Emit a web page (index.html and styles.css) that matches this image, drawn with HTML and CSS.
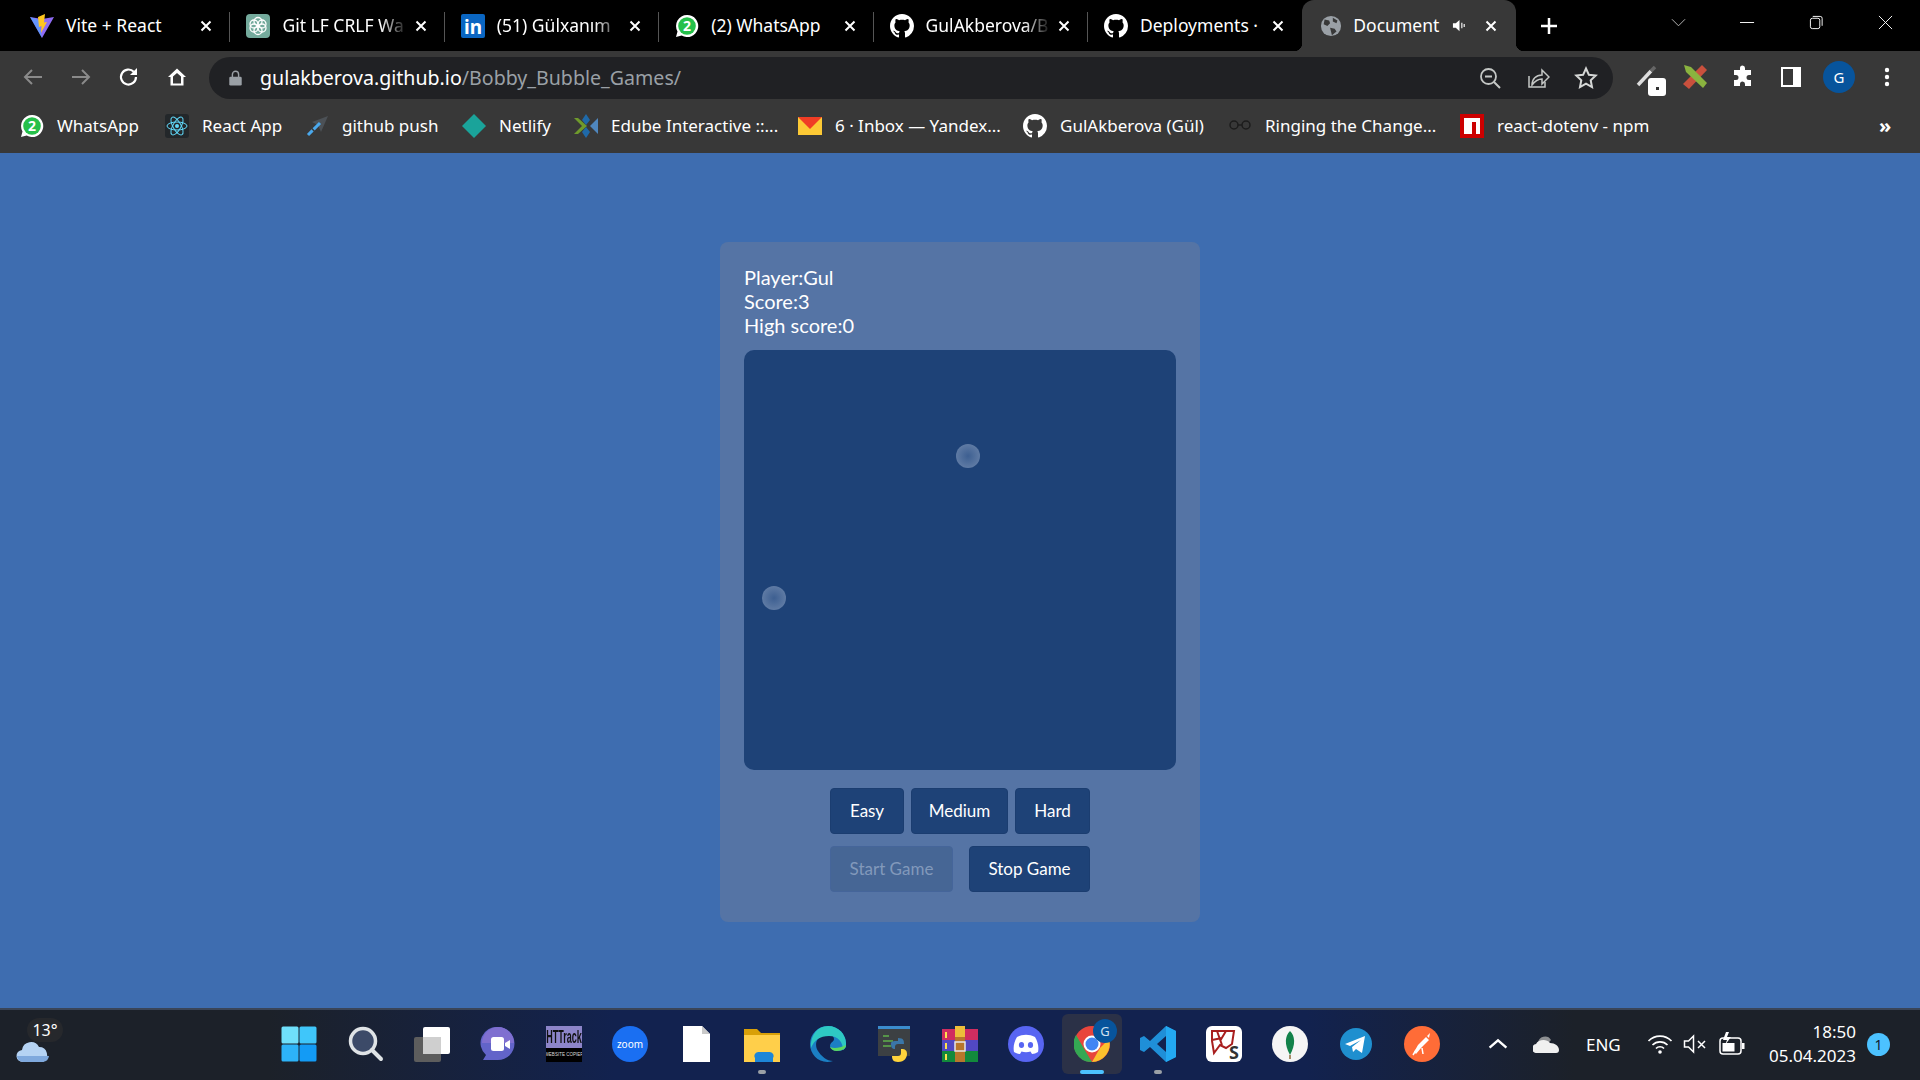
FILE: index.html
```html
<!DOCTYPE html>
<html lang="en">
<head>
    <meta charset="UTF-8">
    <meta name="viewport" content="width=device-width, initial-scale=1.0">
    <title>Document</title>
    <link rel="stylesheet" href="styles.css">
</head>
<body>
    <!-- Shared icons -->
    <svg class="icon-defs" aria-hidden="true">
        <symbol id="i-close" viewBox="0 0 12 12"><path d="M1.5 1.5l9 9M10.5 1.5l-9 9" stroke="#fff" stroke-width="2" fill="none"/></symbol>
        <symbol id="i-github" viewBox="0 0 16 16"><path fill="#fff" d="M8 0C3.58 0 0 3.58 0 8c0 3.54 2.29 6.53 5.47 7.59.4.07.55-.17.55-.38 0-.19-.01-.82-.01-1.49-2.01.37-2.53-.49-2.69-.94-.09-.23-.48-.94-.82-1.13-.28-.15-.68-.52-.01-.53.63-.01 1.08.58 1.23.82.72 1.21 1.87.87 2.33.66.07-.52.28-.87.51-1.07-1.78-.2-3.64-.89-3.64-3.95 0-.87.31-1.59.82-2.15-.08-.2-.36-1.02.08-2.12 0 0 .67-.21 2.2.82.64-.18 1.32-.27 2-.27.68 0 1.36.09 2 .27 1.53-1.04 2.2-.82 2.2-.82.44 1.1.16 1.92.08 2.12.51.56.82 1.27.82 2.15 0 3.07-1.87 3.75-3.65 3.95.29.25.54.73.54 1.48 0 1.07-.01 1.93-.01 2.2 0 .21.15.46.55.38A8.013 8.013 0 0016 8c0-4.42-3.58-8-8-8z"/></symbol>
        <symbol id="i-whatsapp" viewBox="0 0 24 24"><path fill="#fff" d="M12 1a11 11 0 0 0-9.5 16.5L1 23l5.7-1.5A11 11 0 1 0 12 1z"/><circle cx="12" cy="12" r="8.8" fill="#25c04a"/><text x="12" y="17" class="svg-label wa-digit" text-anchor="middle">2</text></symbol>
        <symbol id="i-globe" viewBox="0 0 24 24"><circle cx="12" cy="12" r="11" fill="#9aa0a6"/><path fill="#383838" d="M5 5l5 1 1 3-3 3-4-2zM14 3l5 3-1 3-4-2zM11 14l5 1 2 3-5 4-1-4z"/></symbol>
    </svg>

    <!-- Tabs -->
    <div class="tabstrip">
        <div class="tab">
            <svg class="favicon" viewBox="0 0 24 24"><path fill="#8f6cf5" d="M0 3l12 21L24 3l-12 2z"/><path fill="#41b6ff" d="M0 3l12 21-3-18z" opacity=".55"/><path fill="#ffc71f" d="M15 0L8 3l1 10 2.5-1-.5 7 6-11-3 .5z"/></svg>
            <span class="tab-title">Vite + React</span>
            <svg class="tab-close"><use href="#i-close"/></svg>
        </div>
        <div class="tab">
            <svg class="favicon" viewBox="0 0 24 24"><rect width="24" height="24" rx="4" fill="#74aa9c"/><g fill="none" stroke="#fff" stroke-width="1.3"><circle cx="12" cy="7.5" r="4"/><circle cx="12" cy="16.5" r="4"/><circle cx="8" cy="10" r="4"/><circle cx="16" cy="10" r="4"/><circle cx="8" cy="14" r="4"/><circle cx="16" cy="14" r="4"/></g></svg>
            <span class="tab-title tab-fade">Git LF CRLF Wa</span>
            <svg class="tab-close"><use href="#i-close"/></svg>
        </div>
        <div class="tab">
            <svg class="favicon" viewBox="0 0 24 24"><rect width="24" height="24" rx="2" fill="#0a66c2"/><text x="12" y="20" class="svg-label in-label" text-anchor="middle">in</text></svg>
            <span class="tab-title tab-fade">(51) Gülxanım</span>
            <svg class="tab-close"><use href="#i-close"/></svg>
        </div>
        <div class="tab">
            <svg class="favicon"><use href="#i-whatsapp"/></svg>
            <span class="tab-title">(2) WhatsApp</span>
            <svg class="tab-close"><use href="#i-close"/></svg>
        </div>
        <div class="tab">
            <svg class="favicon"><use href="#i-github"/></svg>
            <span class="tab-title tab-fade">GulAkberova/B</span>
            <svg class="tab-close"><use href="#i-close"/></svg>
        </div>
        <div class="tab tab-last">
            <svg class="favicon"><use href="#i-github"/></svg>
            <span class="tab-title">Deployments ·</span>
            <svg class="tab-close"><use href="#i-close"/></svg>
        </div>
        <div class="tab tab-active">
            <svg class="favicon"><use href="#i-globe"/></svg>
            <span class="tab-title">Document</span>
            <svg class="tab-sound" viewBox="0 0 16 16"><path fill="#fff" d="M1 5.5h3L8 2v12l-4-3.5H1z"/><path d="M10.5 5v6M13 6.5v3" stroke="#fff" stroke-width="1.2"/></svg>
            <svg class="tab-close"><use href="#i-close"/></svg>
        </div>
        <svg class="new-tab" viewBox="0 0 18 18"><path d="M9 1v16M1 9h16" stroke="#fff" stroke-width="2.5"/></svg>
        <div class="window-controls">
            <svg viewBox="0 0 16 16"><path d="M1 4.5l7 7 7-7" stroke="#bbb" fill="none"/></svg>
            <svg viewBox="0 0 16 16"><path d="M0 8h15" stroke="#fff"/></svg>
            <svg viewBox="0 0 16 16"><rect x="1.5" y="3.5" width="10" height="11" rx="2" stroke="#fff" fill="none"/><path d="M4 1.5h8a2 2 0 0 1 2 2v8" stroke="#fff" fill="none"/></svg>
            <svg viewBox="0 0 16 16"><path d="M1 1l14 14M15 1L1 15" stroke="#fff"/></svg>
        </div>
    </div>

    <!-- Address bar -->
    <div class="toolbar">
        <svg class="tool" viewBox="0 0 24 24"><path d="M21 12H4M11 5l-7 7 7 7" stroke="#8a8a8a" stroke-width="2" fill="none"/></svg>
        <svg class="tool" viewBox="0 0 24 24"><path d="M3 12h17M13 5l7 7-7 7" stroke="#8a8a8a" stroke-width="2" fill="none"/></svg>
        <svg class="tool" viewBox="0 0 24 24"><path d="M19 12a7.5 7.5 0 1 1-2.2-5.3" stroke="#fff" stroke-width="2.2" fill="none"/><path d="M20 3v7h-7z" fill="#fff"/></svg>
        <svg class="tool" viewBox="0 0 24 24"><path d="M12 3.5L3 12h2.5v8.5h13V12H21zM8 18.5v-7l4-3.5 4 3.5v7z" fill="#fff"/></svg>
        <div class="omnibox">
            <svg class="lock" viewBox="0 0 14 18"><path d="M3.5 8V5a3.5 3.5 0 0 1 7 0v3" stroke="#9aa0a6" stroke-width="1.6" fill="none"/><rect y="7.5" width="14" height="10" rx="1.5" fill="#9aa0a6"/></svg>
            <div class="url"><span class="url-host">gulakberova.github.io</span>/Bobby_Bubble_Games/</div>
            <svg class="omni-icon" viewBox="0 0 24 24"><circle cx="10.5" cy="10.5" r="7.5" stroke="#c4c7c5" stroke-width="1.8" fill="none"/><path d="M7 10.5h7M16 16l6 6" stroke="#c4c7c5" stroke-width="2" fill="none"/></svg>
            <svg class="omni-icon" viewBox="0 0 24 24"><path d="M3 10v11h16v-5" stroke="#c4c7c5" stroke-width="1.5" fill="none"/><path d="M6 19c0-6 4-10 10-10V4l7 7-7 7v-5c-4 0-7 2-10 6z" stroke="#c4c7c5" stroke-width="1.5" fill="none"/></svg>
            <svg class="omni-icon" viewBox="0 0 24 24"><path d="M12 2.5l2.900 6.300 6.800.8-5 4.700 1.300 6.800-6-3.400-6 3.400 1.300-6.800-5-4.700 6.800-.8z" stroke="#d5d7d6" stroke-width="2" fill="none"/></svg>
        </div>
        <div class="extensions">
            <div class="ext">
                <svg viewBox="0 0 24 24"><path d="M3 20L16 6" stroke="#ddd" stroke-width="3.5"/><path d="M16 6l4-4" stroke="#666" stroke-width="3.5"/></svg>
                <span class="ext-badge"></span>
            </div>
            <div class="ext">
                <svg viewBox="0 0 24 24"><path d="M19 0l5 5L6 24l-6-5z" fill="#c9503d"/><path d="M1 0l7 2 16 16-4 5L3 7z" fill="#8ab33f"/></svg>
            </div>
            <div class="ext">
                <svg viewBox="0 0 24 24"><path fill="#fff" d="M9 3a2.5 2.5 0 0 1 5 0v2h6v5h-2a2.5 2.5 0 0 0 0 5h2v6h-6v-2a2.5 2.5 0 0 0-5 0v2H3v-6h2a2.5 2.5 0 0 0 0-5H3V5h6z"/></svg>
            </div>
            <div class="ext">
                <svg viewBox="0 0 24 24"><rect x="2" y="2" width="20" height="20" fill="#fff"/><rect x="4" y="4" width="10" height="16" fill="#383838"/></svg>
            </div>
            <div class="avatar">G</div>
            <div class="ext">
                <svg viewBox="0 0 24 24"><circle cx="12" cy="5" r="2.2" fill="#fff"/><circle cx="12" cy="12" r="2.2" fill="#fff"/><circle cx="12" cy="19" r="2.2" fill="#fff"/></svg>
            </div>
        </div>
    </div>

    <!-- Bookmarks -->
    <div class="bookmarks">
        <div class="bookmark bm-whatsapp"><svg class="bm-icon"><use href="#i-whatsapp"/></svg>WhatsApp</div>
        <div class="bookmark bm-react">
            <svg class="bm-icon" viewBox="0 0 24 24"><rect width="24" height="24" rx="3" fill="#23272a"/><g fill="none" stroke="#61dafb" stroke-width="1"><ellipse cx="12" cy="12" rx="10" ry="4"/><ellipse cx="12" cy="12" rx="10" ry="4" transform="rotate(60 12 12)"/><ellipse cx="12" cy="12" rx="10" ry="4" transform="rotate(120 12 12)"/></g><circle cx="12" cy="12" r="2" fill="#61dafb"/></svg>
            React App
        </div>
        <div class="bookmark bm-push">
            <svg class="bm-icon" viewBox="0 0 24 24"><path d="M23 2L7 8l6 3 3 7z" fill="#4c5156"/><path d="M15 9L3 21" stroke="#4aa8ec" stroke-width="3" stroke-dasharray="9 1.5 7"/></svg>
            github push
        </div>
        <div class="bookmark bm-netlify">
            <svg class="bm-icon" viewBox="0 0 24 24"><path d="M12 0l12 12-12 12L0 12z" fill="#1aa39a"/></svg>
            Netlify
        </div>
        <div class="bookmark bm-edube">
            <svg class="bm-icon" viewBox="0 0 24 24"><path d="M0 4l8 8-8 8 4 0 9-8-9-8z" fill="#6f9a2c"/><path d="M12 0l-4 6 4 5 4-5zM12 24l-4-6 4-5 4 5z" fill="#1f69a8"/><path d="M24 4l-8 8 8 8z" fill="#4f86bd"/></svg>
            Edube Interactive ::...
        </div>
        <div class="bookmark bm-mail">
            <svg class="bm-icon" viewBox="0 0 24 24"><rect y="3" width="24" height="18" fill="#fcc935"/><path d="M0 3h24L12 15z" fill="#f03d25"/></svg>
            6 · Inbox — Yandex...
        </div>
        <div class="bookmark bm-gh"><svg class="bm-icon"><use href="#i-github"/></svg>GulAkberova (Gül)</div>
        <div class="bookmark bm-ring">
            <svg class="bm-icon" viewBox="0 0 24 24"><g fill="none" stroke="#1c1c1c" stroke-width="1.5"><circle cx="6" cy="11" r="4"/><circle cx="18" cy="11" r="4"/><path d="M10 11h4"/></g></svg>
            Ringing the Change...
        </div>
        <div class="bookmark bm-npm">
            <svg class="bm-icon" viewBox="0 0 24 24"><rect width="24" height="24" fill="#c00"/><path d="M4 4h16v16h-4V8h-4v12H4z" fill="#fff"/></svg>
            react-dotenv - npm
        </div>
        <div class="bm-more">»</div>
    </div>

    <!-- Game -->
    <main class="page">
        <section class="game-card">
            <div class="stats">
                <div>Player:Gul</div>
                <div>Score:3</div>
                <div>High score:0</div>
            </div>
            <div class="board">
                <span class="bubble bubble-one"></span>
                <span class="bubble bubble-two"></span>
            </div>
            <div class="btn-row btn-row-level">
                <button class="btn btn-easy">Easy</button>
                <button class="btn btn-medium">Medium</button>
                <button class="btn btn-hard">Hard</button>
            </div>
            <div class="btn-row btn-row-game">
                <button class="btn btn-start" disabled>Start Game</button>
                <button class="btn btn-stop">Stop Game</button>
            </div>
        </section>
    </main>

    <!-- Taskbar -->
    <footer class="taskbar">
        <div class="weather">
            <svg class="weather-cloud" viewBox="0 0 36 28"><path d="M8 26a6 6 0 0 1-1-12 9 9 0 0 1 17-3 8 8 0 0 1 4 15z" fill="#b5d3f3"/><path d="M2 20a6 6 0 0 0 6 6h20a7 7 0 0 0 6-6z" fill="#7fa9dd"/></svg>
            <span class="weather-temp">13°</span>
        </div>
        <div class="task-apps">
            <div class="task task-start">
                <svg viewBox="0 0 36 36"><rect width="17" height="17" x="0.5" y="0.5" rx="1.5" fill="#6fe0fb"/><rect width="17" height="17" x="18.5" y="0.5" rx="1.5" fill="#3fc6fa"/><rect width="17" height="17" x="0.5" y="18.5" rx="1.5" fill="#2db3f8"/><rect width="17" height="17" x="18.5" y="18.5" rx="1.5" fill="#139bf5"/></svg>
            </div>
            <div class="task">
                <svg viewBox="0 0 36 36"><circle cx="15" cy="15" r="12.5" fill="#3c4a68" stroke="#dfe3e6" stroke-width="3.5"/><path d="M24 24l9 9" stroke="#dfe3e6" stroke-width="4" stroke-linecap="round"/></svg>
            </div>
            <div class="task">
                <svg viewBox="0 0 36 36"><rect x="0" y="11" width="27" height="25" rx="2" fill="#5d5d5d"/><rect x="9" y="1" width="27" height="27" rx="2" fill="#fff"/><rect x="9" y="11" width="18" height="17" fill="#cfcfcf"/></svg>
            </div>
            <div class="task">
                <svg viewBox="0 0 36 36"><path d="M18 1a16 16 0 0 1 0 33H3l3-5A16 16 0 0 1 18 1z" fill="#6264c9"/><path d="M18 1a16 16 0 0 1 16 16H2A16 16 0 0 1 18 1z" fill="#7f6fd0"/><rect x="11" y="11" width="13" height="14" rx="2.5" fill="#fff"/><path d="M25 17l5-3v9l-5-3z" fill="#fff"/></svg>
            </div>
            <div class="task">
                <div class="hittrack"><span class="ht-top">HTTrack</span><span class="ht-bottom">WEBSITE COPIER</span></div>
            </div>
            <div class="task">
                <div class="zoom-icon">zoom</div>
            </div>
            <div class="task">
                <svg viewBox="0 0 36 36"><path d="M5 0h19l8 8v28H5z" fill="#fff"/><path d="M24 0l8 8h-8z" fill="#c9c9c9"/></svg>
            </div>
            <div class="task task-open">
                <svg viewBox="0 0 36 36"><path d="M0 3h13l4 4h19v29H0z" fill="#d9a008"/><path d="M0 9h36v27H0z" fill="#ffcf4a"/><path d="M11 32a4 4 0 0 1 4-6h10a4 4 0 0 1 4 6v4H11z" fill="#1d86d8"/></svg>
            </div>
            <div class="task">
                <svg viewBox="0 0 36 36"><path d="M18 0a18 18 0 0 1 18 19c0 4-4 6-9 6-4 0-7-3-7-5 0-4 4-4 4-7 0-4-4-5-8-4C6 10 4 19 8 25c3 5 9 10 15 10C11 39 0 30 0 18A18 18 0 0 1 18 0z" fill="#1b7fc4"/><path d="M18 0a18 18 0 0 1 18 19c0 3-2 4-3 5 0-8-5-14-14-14C10 10 4 14 1 22 0 10 7 0 18 0z" fill="#2ec9c3"/><path d="M36 19c0 3-4 6-9 6-4 0-6-2-7-4 4 2 10 1 16-2z" fill="#5bd85f"/></svg>
            </div>
            <div class="task">
                <svg viewBox="0 0 36 36"><rect x="2" y="0" width="32" height="30" fill="#3c4043"/><rect x="2" y="0" width="32" height="3" fill="#3b8ccd"/><path d="M7 10h6M7 15h10M7 20h8" stroke="#5fb04c" stroke-width="1.5"/><path d="M22 12c6 0 6 3 6 6h-6a3 3 0 0 0-3 3v2c-3 0-4-2-4-5s2-3 7-3z" fill="#3a76a8"/><path d="M22 36c-5 0-6-3-6-6h6a3 3 0 0 0 3-3v-4c5 0 6 2 6 5s-2 8-9 8z" fill="#ffd43b"/></svg>
            </div>
            <div class="task">
                <svg viewBox="0 0 36 36"><rect x="0" y="3" width="36" height="11" fill="#d02d60"/><rect x="0" y="14" width="36" height="11" fill="#5148c2"/><rect x="0" y="25" width="36" height="11" fill="#128a3c"/><path d="M4 6v6M4 17v6M4 28v6" stroke="#ffe14d" stroke-width="2"/><rect x="13" y="0" width="10" height="36" fill="#b8772c"/><rect x="13" y="0" width="10" height="11" fill="#ecbf3a"/><rect x="13" y="16" width="10" height="9" fill="none" stroke="#e6e6e6" stroke-width="1.5"/></svg>
            </div>
            <div class="task">
                <svg viewBox="0 0 36 36"><ellipse cx="18" cy="18" rx="18" ry="18" fill="#5865f2"/><path d="M9 11c6-3 12-3 18 0 3 5 4 10 3 15-2 1-4 2-6 2l-1.5-2.5c-3 1-6 1-9 0L12 28c-2 0-4-1-6-2-1-5 0-10 3-15z" fill="#fff"/><ellipse cx="13.5" cy="19" rx="2.6" ry="3" fill="#5865f2"/><ellipse cx="22.5" cy="19" rx="2.6" ry="3" fill="#5865f2"/></svg>
            </div>
            <div class="task task-active">
                <svg viewBox="0 0 36 36"><circle cx="18" cy="18" r="18" fill="#e8453c"/><path d="M18 36A18 18 0 0 1 2 9l10 17z" fill="#34a853"/><path d="M18 36l8-14 9-9a18 18 0 0 1-17 23z" fill="#fbc02d"/><circle cx="18" cy="18" r="8.5" fill="#fff"/><circle cx="18" cy="18" r="6.5" fill="#4285f4"/></svg>
                <span class="chrome-badge">G</span>
            </div>
            <div class="task task-open">
                <svg viewBox="0 0 36 36"><path d="M26 0l10 5v26l-10 5L10 21l-6 5-4-2V12l4-2 6 5zM26 10l-9 8 9 8z" fill="#1f8fd8" fill-rule="evenodd"/><path d="M26 0l10 5v26l-10 5z" fill="#23a9f2"/></svg>
            </div>
            <div class="task">
                <div class="ks-icon">
                    <svg viewBox="0 0 36 36"><path d="M6 5h22l-2 13-6 4-6-3-6 8-2-12zM11 5l5 14M20 5l-6 10M6 14l10-2" stroke="#a81e1e" stroke-width="2" fill="none"/></svg>
                    <span class="ks-letter">S</span>
                </div>
            </div>
            <div class="task">
                <svg viewBox="0 0 36 36"><circle cx="18" cy="18" r="18" fill="#f5f5f5"/><path d="M18 5c5 5 6 13 0 24-6-11-5-19 0-24z" fill="#12824a"/><path d="M18 29v4" stroke="#8c6a3a" stroke-width="1.5"/></svg>
            </div>
            <div class="task">
                <svg viewBox="0 0 36 36"><circle cx="18" cy="18" r="16" fill="#1f8fcf"/><path d="M7 18l20-8-3 17-6-4-3 3-1-5 9-7-11 6z" fill="#fff"/></svg>
            </div>
            <div class="task">
                <svg viewBox="0 0 36 36"><circle cx="18" cy="18" r="18" fill="#ff6c37"/><path d="M26 7l-3 3 2 2zM22 11l3 3-8 8-5 6-2-2 4-7z" fill="#fff"/><path d="M12 24l-3 5M18 22l1 6" stroke="#fff" stroke-width="1.5"/></svg>
            </div>
        </div>
        <div class="tray">
            <svg class="tray-caret" viewBox="0 0 16 10"><path d="M1 8l7-6 7 6" stroke="#fff" stroke-width="2" fill="none"/></svg>
            <svg class="tray-cloud" viewBox="0 0 26 18"><path d="M5 8a7 7 0 0 1 13-3l-7 8z" fill="#8d8f92"/><path d="M4 18a4 4 0 0 1-1-9c2-4 10-6 14-1 5 0 9 3 9 7 0 2-1 3-3 3z" fill="#f0f0f0"/></svg>
            <span class="tray-lang">ENG</span>
            <svg class="tray-wifi" viewBox="0 0 26 20"><path d="M1.5 7a16 16 0 0 1 23 0M5.5 11a10.5 10.5 0 0 1 15 0M9 14.5a5.5 5.5 0 0 1 8 0" stroke="#fff" stroke-width="1.7" fill="none"/><circle cx="13" cy="18" r="1.8" fill="#fff"/></svg>
            <svg class="tray-sound" viewBox="0 0 24 20"><path d="M1.5 7h4l5-5v16l-5-5h-4z" stroke="#fff" stroke-width="1.5" fill="none"/><path d="M15 7l7 7M22 7l-7 7" stroke="#fff" stroke-width="1.5"/></svg>
            <svg class="tray-battery" viewBox="0 0 26 24"><rect x="1" y="6" width="21" height="16" rx="3" stroke="#fff" stroke-width="1.5" fill="none"/><rect x="3.5" y="11" width="12" height="8.5" fill="#fff"/><rect x="23" y="11" width="2.5" height="6" fill="#fff"/><path d="M7 0L4 8h4l-2 5 6-8H8l2-5z" fill="#fff"/></svg>
            <div class="clock">
                <div>18:50</div>
                <div>05.04.2023</div>
            </div>
            <div class="notify-badge">1</div>
        </div>
    </footer>
</body>
</html>
```

FILE: styles.css
```css
* {
    box-sizing: border-box;
}

html, body {
    height: 100%;
}

body {
    margin: 0;
    display: flex;
    flex-direction: column;
    height: 1080px;
    overflow: hidden;
    background-color: #3e6db0;
    color: #fff;
    font-family: "Noto Sans", "Open Sans", sans-serif;
}

.icon-defs {
    display: none;
}

.svg-label {
    font-family: "Noto Sans", sans-serif;
    font-weight: 700;
}

.wa-digit {
    font-size: 14px;
    fill: #fff;
}

.in-label {
    font-size: 19px;
    fill: #fff;
}

/* Tabs */
.tabstrip {
    display: flex;
    align-items: center;
    height: 51px;
    padding-left: 16px;
    background-color: #000;
    flex-shrink: 0;
}

.tab {
    position: relative;
    display: flex;
    align-items: center;
    gap: 12px;
    width: 214.4px;
    height: 51px;
    padding: 0 18px 0 16px;
    font-size: 17.5px;
    white-space: nowrap;
}

.tab:first-child {
    padding-left: 14px;
}

.tab::after {
    content: "";
    position: absolute;
    top: 12px;
    right: 0;
    width: 1px;
    height: 30px;
    background-color: #555;
}

.tab-last::after {
    display: none;
}

.favicon {
    width: 24px;
    height: 24px;
    flex-shrink: 0;
}

.tab-title {
    flex: 1;
    min-width: 0;
    margin-top: -1px;
}

.tab-fade {
    margin-right: -5px;
    -webkit-mask-image: linear-gradient(to right, #000 78%, transparent 100%);
    mask-image: linear-gradient(to right, #000 78%, transparent 100%);
}

.tab-close {
    width: 12px;
    height: 12px;
    flex-shrink: 0;
}

.tab-active {
    width: 214px;
    height: 51px;
    padding-left: 18px;
    padding-right: 19px;
    gap: 11px;
    background-color: #383838;
    border-radius: 12px 12px 0 0;
}

.tab-active .favicon {
    width: 22px;
    height: 22px;
}

.tab-active::before, .tab-active::after {
    content: "";
    position: absolute;
    bottom: 0;
    top: auto;
    width: 8px;
    height: 8px;
    background-color: transparent;
}

.tab-active::before {
    left: -8px;
    background: radial-gradient(circle at 0 0, #000 8px, #383838 8.5px);
}

.tab-active::after {
    right: -8px;
    background: radial-gradient(circle at 100% 0, #000 8px, #383838 8.5px);
}

.tab-sound {
    width: 15px;
    height: 15px;
    margin-right: 7px;
    flex-shrink: 0;
}

.new-tab {
    width: 18px;
    height: 18px;
    margin-left: 24px;
}

.window-controls {
    display: flex;
    align-items: center;
    gap: 54px;
    margin-left: auto;
    margin-right: 27px;
    margin-top: -7px;
}

.window-controls svg {
    width: 15px;
    height: 15px;
}

/* Address bar */
.toolbar {
    display: flex;
    align-items: center;
    height: 51px;
    padding-left: 21px;
    gap: 24px;
    background-color: #383838;
    flex-shrink: 0;
}

.tool {
    width: 24px;
    height: 24px;
    flex-shrink: 0;
}

.omnibox {
    display: flex;
    align-items: center;
    width: 1404px;
    height: 42px;
    margin-left: -4px;
    margin-top: 2px;
    padding: 0 15px 0 20px;
    border-radius: 21px;
    background-color: #202124;
    flex-shrink: 0;
}

.lock {
    width: 13px;
    height: 16px;
    flex-shrink: 0;
}

.url {
    flex: 1;
    margin-left: 18px;
    font-size: 19.6px;
    color: #9aa0a6;
}

.url-host {
    color: #fff;
}

.omni-icon {
    width: 24px;
    height: 24px;
    margin-left: 24px;
    flex-shrink: 0;
}

.extensions {
    display: flex;
    align-items: center;
    margin-left: -2px;
    gap: 24px;
}

.ext {
    position: relative;
    display: flex;
    width: 24px;
    height: 24px;
}

.ext svg {
    width: 24px;
    height: 24px;
}

.ext-badge {
    position: absolute;
    right: -7px;
    bottom: -7px;
    width: 18px;
    height: 18px;
    border-radius: 3px;
    background-color: #fff;
}

.ext-badge::after {
    content: "";
    position: absolute;
    left: 8px;
    top: 9px;
    width: 3px;
    height: 3px;
    background-color: #333;
}

.avatar {
    display: flex;
    align-items: center;
    justify-content: center;
    width: 32px;
    height: 32px;
    margin: 0 -4px;
    border-radius: 50%;
    background-color: #07549c;
    font-size: 15px;
}

/* Bookmarks */
.bookmarks {
    display: flex;
    align-items: center;
    height: 51px;
    padding: 0 0 4px 20px;
    background-color: #383838;
    font-size: 17px;
    white-space: nowrap;
    flex-shrink: 0;
}

.bookmark {
    display: flex;
    align-items: center;
    gap: 13px;
}

.bm-icon {
    width: 24px;
    height: 24px;
    flex-shrink: 0;
}

.bm-whatsapp { width: 145px; }
.bm-react { width: 140px; }
.bm-push { width: 157px; }
.bm-netlify { width: 112px; }
.bm-edube { width: 224px; }
.bm-mail { width: 225px; }
.bm-gh { width: 205px; }
.bm-ring { width: 232px; }
.bm-npm { width: 419px; }

.bm-more {
    font-size: 20px;
    font-weight: 700;
}

/* Game */
.page {
    flex: 1;
    display: flex;
    justify-content: center;
    align-items: flex-start;
    padding-top: 89px;
}

.game-card {
    width: 480px;
    height: 680px;
    padding: 24px;
    border-radius: 8px;
    background-color: #5574a5;
    font-family: "Lato", sans-serif;
}

.stats {
    font-size: 20px;
    line-height: 24px;
    margin: -1px 0 13px;
}

.board {
    position: relative;
    height: 420px;
    border-radius: 10px;
    background-color: #1e4277;
}

.bubble {
    position: absolute;
    width: 24px;
    height: 24px;
    border-radius: 50%;
    background: radial-gradient(circle, #3d5f91 0%, #6d86ac 100%);
}

.bubble-one {
    left: 212px;
    top: 94px;
}

.bubble-two {
    left: 18px;
    top: 236px;
}

.btn-row {
    display: flex;
    justify-content: center;
}

.btn-row-level {
    gap: 7px;
    margin-top: 18px;
}

.btn-row-game {
    gap: 16px;
    margin-top: 12px;
}

.btn {
    height: 46px;
    padding: 0 0 2px;
    border: 1px solid #1b3d70;
    border-radius: 4px;
    background-color: #1e4277;
    color: #fff;
    font-family: inherit;
    font-size: 17px;
}

.btn-easy { width: 74px; }
.btn-medium { width: 97px; }
.btn-hard { width: 75px; }
.btn-start { width: 123px; }
.btn-stop { width: 121px; }

.btn:disabled {
    border-color: #45659a;
    background-color: #466695;
    color: #8299bb;
}

/* Taskbar */
.taskbar {
    display: flex;
    align-items: center;
    height: 72px;
    padding-bottom: 2px;
    border-top: 2px solid #3a4558;
    background: linear-gradient(to right, #1c2129 0, #1c2129 14%, #12224f 32%, #12224f 68%, #1c2129 82%, #1c2129 100%);
    flex-shrink: 0;
}

.weather {
    position: relative;
    width: 265px;
    height: 68px;
    flex-shrink: 0;
}

.weather-cloud {
    position: absolute;
    left: 15px;
    top: 26px;
    width: 36px;
    height: 28px;
}

.weather-temp {
    position: absolute;
    left: 27px;
    top: 8px;
    width: 36px;
    height: 24px;
    border-radius: 12px;
    background-color: #26282c;
    font-size: 16px;
    line-height: 24px;
    text-align: center;
}

.task-apps {
    display: flex;
    flex-shrink: 0;
}

.task {
    position: relative;
    display: flex;
    align-items: center;
    justify-content: center;
    width: 66px;
    height: 60px;
    border-radius: 6px;
}

.task-start {
    width: 68px;
}

.task > svg {
    width: 36px;
    height: 36px;
}

.task-active {
    width: 60px;
    margin: 0 3px;
    background-color: #2b3147;
}

.task-open::after, .task-active::after {
    content: "";
    position: absolute;
    bottom: 0;
    left: 50%;
    width: 8px;
    height: 4px;
    margin-left: -4px;
    border-radius: 2px;
    background-color: #9aa0a6;
}

.task-active::after {
    width: 24px;
    margin-left: -12px;
    background-color: #4cc2ff;
}

.chrome-badge {
    position: absolute;
    top: 5px;
    right: 5px;
    width: 24px;
    height: 24px;
    border-radius: 50%;
    background-color: #07549c;
    color: #cfe0f0;
    font-size: 13px;
    line-height: 24px;
    text-align: center;
}

.hittrack {
    display: flex;
    flex-direction: column;
    align-items: center;
    justify-content: space-between;
    width: 36px;
    height: 36px;
    overflow: hidden;
    background: linear-gradient(to bottom, #8d85c9 0, #8d85c9 62%, #000 62%);
    color: #111;
    line-height: 1;
    font-family: "Liberation Sans", sans-serif;
}

.ht-top {
    font-size: 9px;
    font-weight: 700;
    margin-top: 3px;
    transform: scaleY(2);
    transform-origin: top;
}

.ht-bottom {
    font-size: 4.5px;
    color: #ddd;
    margin-bottom: 5px;
    white-space: nowrap;
}

.zoom-icon {
    width: 36px;
    height: 36px;
    border-radius: 50%;
    background-color: #1a6ff2;
    font-size: 10px;
    line-height: 36px;
    text-align: center;
}

.ks-icon {
    position: relative;
    width: 36px;
    height: 36px;
    border-radius: 6px;
    background-color: #fff;
}

.ks-icon svg {
    width: 36px;
    height: 36px;
}

.ks-letter {
    position: absolute;
    right: 3px;
    bottom: 1px;
    color: #333;
    font-size: 18px;
    font-weight: 700;
    line-height: 1;
}

.tray {
    display: flex;
    align-items: center;
    flex: 1;
    margin-left: 33px;
    font-size: 17px;
}

.tray-caret {
    width: 20px;
    height: 12px;
}

.tray-cloud {
    width: 26px;
    height: 18px;
    margin-left: 25px;
}

.tray-lang {
    width: 34px;
    margin-left: 27px;
    white-space: nowrap;
}

.tray-wifi {
    width: 26px;
    height: 20px;
    margin-left: 27px;
}

.tray-sound {
    width: 24px;
    height: 20px;
    margin-left: 10px;
}

.tray-battery {
    width: 26px;
    height: 24px;
    margin-left: 12px;
}

.clock {
    margin-left: auto;
    line-height: 24px;
    text-align: right;
}

.notify-badge {
    width: 23px;
    height: 23px;
    margin: 0 30px 0 11px;
    border-radius: 50%;
    background-color: #4cc2ff;
    color: #10202e;
    font-size: 14px;
    line-height: 23px;
    text-align: center;
}
```
